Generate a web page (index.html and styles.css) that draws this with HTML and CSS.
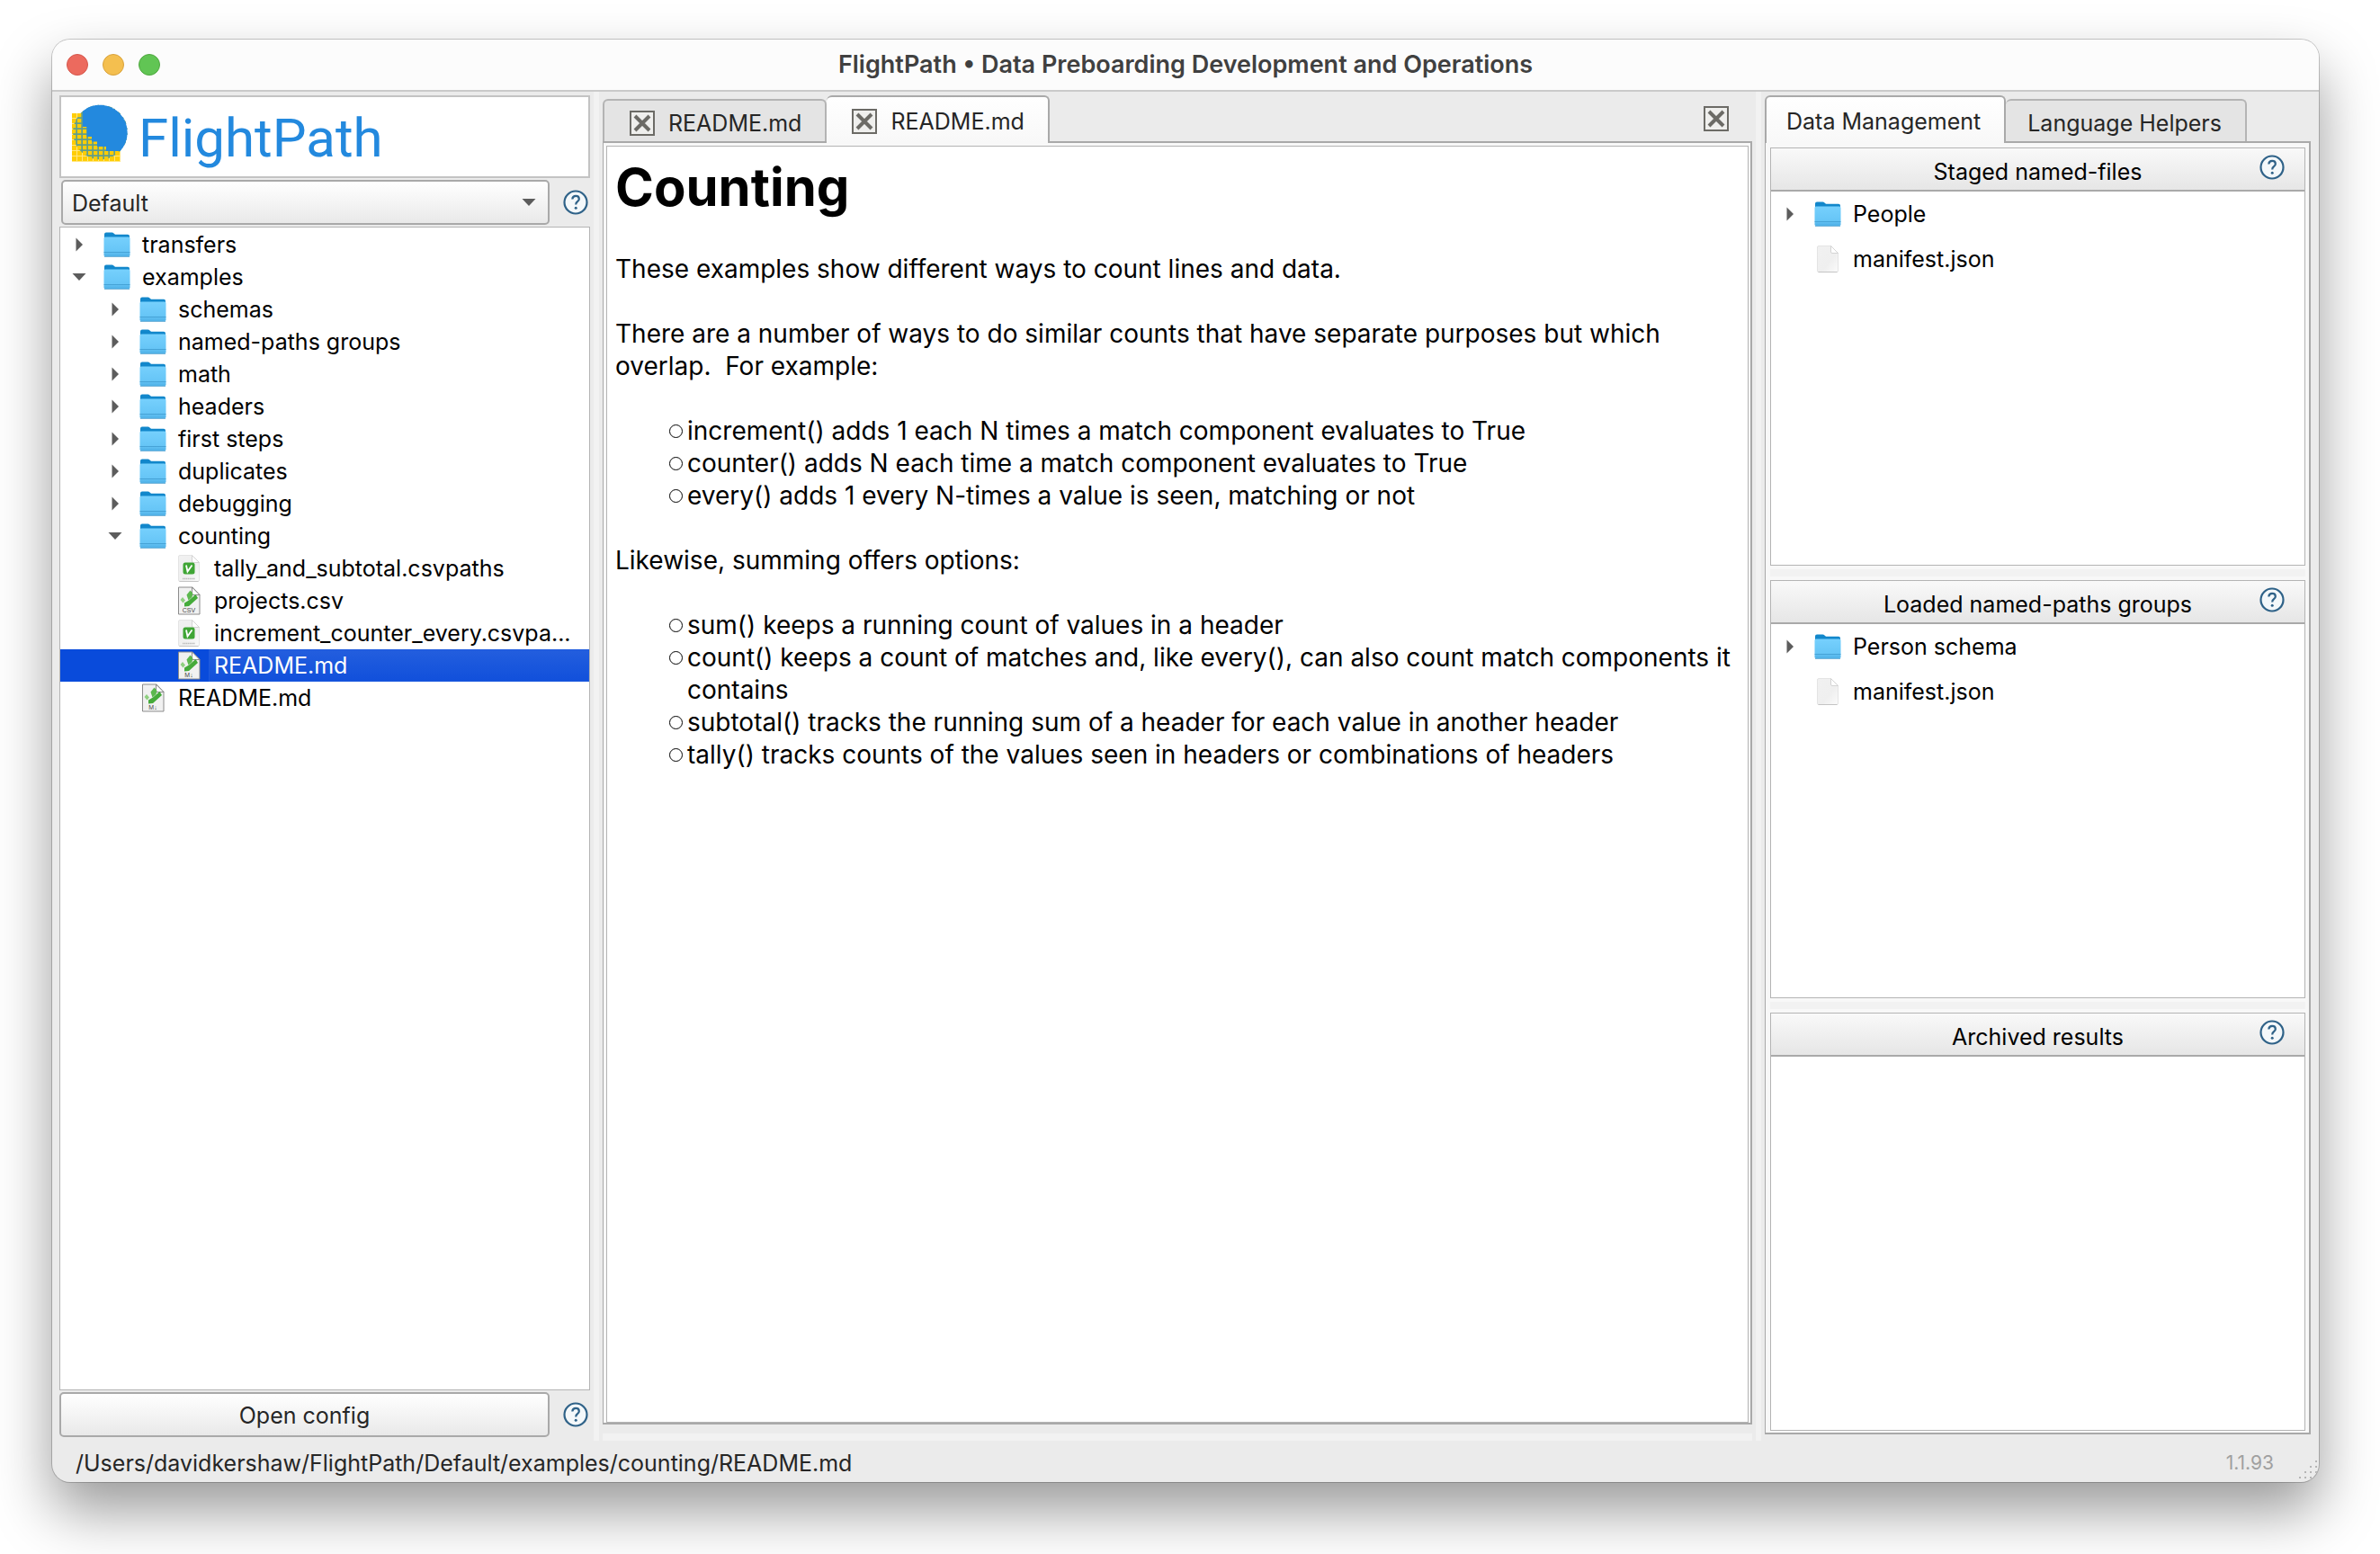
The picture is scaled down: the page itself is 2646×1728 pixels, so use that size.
FILE: index.html
```html
<!DOCTYPE html>
<html lang="en">
<head>
<meta charset="utf-8">
<title>FlightPath • Data Preboarding Development and Operations</title>
<link rel="stylesheet" href="styles.css">
</head>
<body>
<svg class="sprite" aria-hidden="true">
  <defs>
    <linearGradient id="folder-face" x1="0" y1="0" x2="0" y2="1">
      <stop offset="0" stop-color="#76d0fd"/>
      <stop offset="0.75" stop-color="#66c5f6"/>
      <stop offset="1" stop-color="#4fb0e6"/>
    </linearGradient>
    <linearGradient id="sheet-face" x1="0" y1="0" x2="1" y2="1">
      <stop offset="0" stop-color="#f1f1f1"/>
      <stop offset="0.6" stop-color="#efefef"/>
      <stop offset="1" stop-color="#fbfbfb"/>
    </linearGradient>
    <pattern id="logo-mesh" y="4" width="6" height="6" patternUnits="userSpaceOnUse">
      <rect width="6" height="6" fill="#ffe680"/>
      <rect width="5" height="5" fill="#ffcd05"/>
    </pattern>
    <pattern id="logo-net" y="4" width="6" height="6" patternUnits="userSpaceOnUse">
      <path d="M5.200 0V6M0 5.200H6" stroke="#5f9e8c" stroke-width="1.800"/>
    </pattern>
    <symbol id="folder" viewBox="0 0 32 32">
      <path d="M2 4.500q0-2 2-2h6.500q1 0 2 1l1.500 1.200H28q2 0 2 2V14H2z" fill="#1287cb"/>
      <path d="M1.500 9q0-1.500 1.500-1.500h26q1.500 0 1.500 1.500v18.500q0 1.500-1.500 1.500H3q-1.500 0-1.500-1.500z" fill="url(#folder-face)"/>
      <path d="M1.500 24.500h29M2 29.500h28" stroke="#3b96cb" stroke-width="1" opacity="0.700"/>
    </symbol>
    <symbol id="sheet" viewBox="0 0 32 32">
      <path d="M4.500 3q0-1.500 1.500-1.500h13.500l8 8V29q0 1.500-1.500 1.500H6q-1.500 0-1.500-1.500z" fill="url(#sheet-face)" stroke="#e4e4e4"/>
      <path d="M19.500 1.500v6.500q0 1.500 1.500 1.500h6.500z" fill="#fff" stroke="#d4d4d4"/>
      <path d="M5.500 30.500h21" stroke="#c4c4c4"/>
    </symbol>
    <symbol id="csvpaths" viewBox="0 0 32 32">
      <use href="#sheet"/>
      <rect x="9.500" y="9.500" width="13" height="13" rx="2.500" fill="#3fa535"/>
      <path d="M13 12.500l1.500 7 5-7" fill="none" stroke="#fff" stroke-width="1.800"/>
      <path d="M9 27.500h14" stroke="#bdbdbd" stroke-width="1.500" stroke-dasharray="1.500 0.500"/>
    </symbol>
    <symbol id="vimdoc" viewBox="0 0 32 32">
      <path d="M4.500 1h15.500l8 8.500V31H4.500z" fill="#f1f1f1" stroke="#8c8c8c"/>
      <path d="M19.500 1v8.500H28z" fill="#fff" stroke="#8c8c8c"/>
      <path d="M6.500 15l2.500-3 3 3.500-2.500 3z" fill="#8fd080"/>
      <path d="M13.500 9.500l4-5 3 3.500-1 4-4 3.500z" fill="#5cb84e"/>
      <path d="M11 18.500l5-3 7.500-6.500 2.500 4-10 9-5 0.500z" fill="#45ab3a"/>
    </symbol>
    <symbol id="help" viewBox="0 0 28 28">
      <circle cx="14" cy="14" r="12.500" fill="#f4f8fa" stroke="#2f6288" stroke-width="2.200"/>
      <path d="M10.300 10.500q0.300-3.600 3.800-3.600 3.700 0 3.700 3.300 0 1.800-1.900 3-1.700 1.100-1.700 3.300" fill="none" stroke="#2f6288" stroke-width="2.200"/>
      <circle cx="14.200" cy="20.300" r="1.500" fill="#2f6288"/>
    </symbol>
    <symbol id="cross-box" viewBox="0 0 28 28">
      <rect x="1" y="1" width="26" height="26" fill="#efefed" stroke="#6c6b66" stroke-width="2"/>
      <path d="M6 6l16 16M22 6L6 22" stroke="#6c6b66" stroke-width="4"/>
    </symbol>
    <symbol id="right" viewBox="0 0 16 16"><path d="M4.500 0.500v15L12 8z" fill="#5c5c5c"/></symbol>
    <symbol id="down" viewBox="0 0 16 16"><path d="M0.500 4h15L8 12z" fill="#5c5c5c"/></symbol>
  </defs>
</svg>

<div class="window">
  <header class="titlebar">
    <div class="lights">
      <button class="light light-close" aria-label="Close"></button>
      <button class="light light-min" aria-label="Minimize"></button>
      <button class="light light-zoom" aria-label="Zoom"></button>
    </div>
    <h1 class="title">FlightPath • Data Preboarding Development and Operations</h1>
  </header>

  <main class="panes">
    <section class="sidebar">
      <div class="logo">
        <svg class="logo-mark" viewBox="0 0 64 64" aria-hidden="true">
          <rect y="10" width="54" height="54" fill="url(#logo-mesh)"/>
          <circle cx="31.500" cy="31" r="30.500" fill="url(#logo-net)"/>
          <path d="M12 7.500A30.500 30.500 0 0 1 53.500 52H38V47H28V41.500H22V36H16.500V25H12z" fill="#2389de"/>
        </svg>
        <span class="logo-text">FlightPath</span>
      </div>
      <div class="field-row">
        <div class="select-wrap">
          <select class="project" aria-label="Project"><option>Default</option></select>
          <svg class="select-arrow" aria-hidden="true"><use href="#down"/></svg>
        </div>
        <button class="help" aria-label="Help"><svg><use href="#help"/></svg></button>
      </div>
      <ul class="tree box">
        <li class="row"><svg class="arrow"><use href="#right"/></svg><svg class="icon"><use href="#folder"/></svg><span class="name">transfers</span></li>
        <li class="row"><svg class="arrow"><use href="#down"/></svg><svg class="icon"><use href="#folder"/></svg><span class="name">examples</span></li>
        <li class="row level-1"><svg class="arrow"><use href="#right"/></svg><svg class="icon"><use href="#folder"/></svg><span class="name">schemas</span></li>
        <li class="row level-1"><svg class="arrow"><use href="#right"/></svg><svg class="icon"><use href="#folder"/></svg><span class="name">named-paths groups</span></li>
        <li class="row level-1"><svg class="arrow"><use href="#right"/></svg><svg class="icon"><use href="#folder"/></svg><span class="name">math</span></li>
        <li class="row level-1"><svg class="arrow"><use href="#right"/></svg><svg class="icon"><use href="#folder"/></svg><span class="name">headers</span></li>
        <li class="row level-1"><svg class="arrow"><use href="#right"/></svg><svg class="icon"><use href="#folder"/></svg><span class="name">first steps</span></li>
        <li class="row level-1"><svg class="arrow"><use href="#right"/></svg><svg class="icon"><use href="#folder"/></svg><span class="name">duplicates</span></li>
        <li class="row level-1"><svg class="arrow"><use href="#right"/></svg><svg class="icon"><use href="#folder"/></svg><span class="name">debugging</span></li>
        <li class="row level-1"><svg class="arrow"><use href="#down"/></svg><svg class="icon"><use href="#folder"/></svg><span class="name">counting</span></li>
        <li class="row level-2"><span class="arrow"></span><svg class="icon"><use href="#csvpaths"/></svg><span class="name">tally_and_subtotal.csvpaths</span></li>
        <li class="row level-2"><span class="arrow"></span><svg class="icon" viewBox="0 0 32 32"><use href="#vimdoc"/><text class="icon-label" x="16" y="29">CSV</text></svg><span class="name">projects.csv</span></li>
        <li class="row level-2"><span class="arrow"></span><svg class="icon"><use href="#csvpaths"/></svg><span class="name">increment_counter_every.csvpa...</span></li>
        <li class="row level-2 selected"><span class="arrow"></span><svg class="icon" viewBox="0 0 32 32"><use href="#vimdoc"/><text class="icon-label" x="16" y="29">M↓</text></svg><span class="name">README.md</span></li>
        <li class="row level-1"><span class="arrow"></span><svg class="icon" viewBox="0 0 32 32"><use href="#vimdoc"/><text class="icon-label" x="16" y="29">M↓</text></svg><span class="name">README.md</span></li>
      </ul>
      <div class="field-row">
        <button class="config">Open config</button>
        <button class="help" aria-label="Help"><svg><use href="#help"/></svg></button>
      </div>
    </section>

    <div class="splitter"></div>

    <section class="editor">
      <div class="tabs">
        <button class="tab file-tab"><svg class="cross"><use href="#cross-box"/></svg>README.md</button>
        <button class="tab file-tab active"><svg class="cross"><use href="#cross-box"/></svg>README.md</button>
        <button class="close-all" aria-label="Close all tabs"><svg class="cross"><use href="#cross-box"/></svg></button>
      </div>
      <div class="tab-pane editor-pane">
        <article class="document box">
          <h2>Counting</h2>
          <p>These examples show different ways to count lines and data.</p>
          <p>There are a number of ways to do similar counts that have separate purposes but which overlap.&nbsp; For example:</p>
          <ul>
            <li>increment() adds 1 each N times a match component evaluates to True</li>
            <li>counter() adds N each time a match component evaluates to True</li>
            <li>every() adds 1 every N-times a value is seen, matching or not</li>
          </ul>
          <p>Likewise, summing offers options:</p>
          <ul>
            <li>sum() keeps a running count of values in a header</li>
            <li>count() keeps a count of matches and, like every(), can also count match components it contains</li>
            <li>subtotal() tracks the running sum of a header for each value in another header</li>
            <li>tally() tracks counts of the values seen in headers or combinations of headers</li>
          </ul>
        </article>
      </div>
      <div class="grip"></div>
    </section>

    <div class="splitter"></div>

    <section class="data">
      <div class="tabs">
        <button class="tab active">Data Management</button>
        <button class="tab">Language Helpers</button>
      </div>
      <div class="tab-pane data-pane">
        <div class="group box">
          <div class="group-head"><h3>Staged named-files</h3><button class="help" aria-label="Help"><svg><use href="#help"/></svg></button></div>
          <ul class="group-list">
            <li class="row tall"><svg class="arrow"><use href="#right"/></svg><svg class="icon"><use href="#folder"/></svg><span class="name">People</span></li>
            <li class="row tall"><span class="arrow"></span><svg class="icon"><use href="#sheet"/></svg><span class="name">manifest.json</span></li>
          </ul>
        </div>
        <div class="grip"></div>
        <div class="group box">
          <div class="group-head"><h3>Loaded named-paths groups</h3><button class="help" aria-label="Help"><svg><use href="#help"/></svg></button></div>
          <ul class="group-list">
            <li class="row tall"><svg class="arrow"><use href="#right"/></svg><svg class="icon"><use href="#folder"/></svg><span class="name">Person schema</span></li>
            <li class="row tall"><span class="arrow"></span><svg class="icon"><use href="#sheet"/></svg><span class="name">manifest.json</span></li>
          </ul>
        </div>
        <div class="grip"></div>
        <div class="group box">
          <div class="group-head"><h3>Archived results</h3><button class="help" aria-label="Help"><svg><use href="#help"/></svg></button></div>
        </div>
      </div>
    </section>
  </main>

  <footer class="status">
    <span>/Users/davidkershaw/FlightPath/Default/examples/counting/README.md</span>
    <span class="version">1.1.93</span>
    <svg class="resize" viewBox="0 0 24 24" aria-hidden="true">
      <path d="M20 0h2v2h-2zM14 6h2v2h-2zM20 6h2v2h-2zM8 12h2v2H8zM14 12h2v2h-2zM20 12h2v2h-2zM2 18h2v2H2zM8 18h2v2H8zM14 18h2v2h-2z" fill="#b5b5b5"/>
    </svg>
  </footer>
</div>
</body>
</html>
```
FILE: styles.css
```css
* {
  box-sizing: border-box;
}

body {
  margin: 0;
  min-height: 100vh;
  padding: 44px 68px 80px 58px;
  display: flex;
  background: #fff;
  color: #000;
  font: 25px/36px Inter, "Liberation Sans", sans-serif;
}

ul {
  margin: 0;
  padding: 0;
  list-style: none;
}

button,
select {
  margin: 0;
  padding: 0;
  border: 0;
  background: none;
  color: #262626;
  font: inherit;
}

.sprite {
  position: absolute;
  width: 0;
  height: 0;
}

.window {
  flex: 1;
  min-width: 0;
  display: flex;
  flex-direction: column;
  overflow: hidden;
  border-radius: 20px;
  background: #ebebeb;
  box-shadow: 0 0 0 1px rgba(0, 0, 0, 0.2), 0 32px 64px rgba(0, 0, 0, 0.4);
}

.titlebar {
  display: grid;
  grid-template-columns: 1fr auto 1fr;
  align-items: center;
  height: 58px;
  padding: 0 16px;
  border-bottom: 2px solid #cacaca;
  background: #fcfcfc;
}

.lights {
  display: flex;
  gap: 16px;
}

.light {
  width: 24px;
  height: 24px;
  border-radius: 50%;
}

.light-close {
  border: 1px solid #d5574c;
  background: #ec6a5e;
}

.light-min {
  border: 1px solid #d8a23c;
  background: #f4bf4f;
}

.light-zoom {
  border: 1px solid #4fa73f;
  background: #61c554;
}

.title {
  margin: 0;
  color: #404040;
  font-size: 27px;
  font-weight: 600;
}

.panes {
  flex: 1;
  display: grid;
  grid-template-columns: 590px 6px minmax(0, 1fr) 6px 607px;
  gap: 4px;
  padding: 0 9px 0 8px;
}

.box {
  border: 1px solid #b4b4b4;
  background: #fff;
}

.splitter {
  background: #f2f2f2;
}

.grip {
  height: 8px;
  background: #f2f2f2;
}

.sidebar {
  display: flex;
  flex-direction: column;
  gap: 2px;
  padding: 4px 0;
}

.logo {
  display: flex;
  align-items: flex-start;
  gap: 10px;
  height: 92px;
  padding: 8px 12px;
  border: 2px solid #c3c3c3;
  background: #fff;
}

.logo-mark {
  width: 64px;
  height: 64px;
}

.logo-text {
  color: #2389de;
  font: 400 60px/76px Roboto, sans-serif;
}

.field-row {
  display: flex;
  align-items: center;
  gap: 15px;
  height: 50px;
  padding-right: 2px;
}

.select-wrap {
  position: relative;
  flex: 1;
  height: 50px;
  margin-left: 2px;
}

.project,
.config {
  height: 50px;
  padding-top: 2px;
  border: 2px solid #a9a9a9;
  border-radius: 5px;
  background: linear-gradient(#fff, #e9e9e9);
}

.project {
  width: 100%;
  padding-left: 10px;
  appearance: none;
}

.select-arrow {
  position: absolute;
  top: 17px;
  right: 15px;
  width: 16px;
  height: 16px;
  pointer-events: none;
}

.config {
  flex: 1;
}

.help {
  display: flex;
}

.help svg {
  width: 28px;
  height: 28px;
}

.tree {
  flex: 1;
  padding-top: 1px;
}

.row {
  display: flex;
  align-items: center;
  height: 36px;
  padding-left: 13px;
}

.level-1 {
  padding-left: 53px;
}

.level-2 {
  padding-left: 93px;
}

.tall {
  height: 50px;
}

.selected {
  background: #094bdb;
}

.arrow {
  flex: none;
  width: 16px;
  height: 16px;
  margin-right: 18px;
}

.icon {
  flex: none;
  width: 32px;
  height: 32px;
}

.icon-label {
  font: 7px "Liberation Sans", sans-serif;
  text-anchor: middle;
  fill: #444;
}

.name {
  flex: 1;
  height: 100%;
  display: flex;
  align-items: center;
  margin-left: 6px;
  padding-left: 6px;
  white-space: nowrap;
}

.selected .name {
  border: 1px solid #1d5ade;
  padding-left: 5px;
  background: linear-gradient(#235ede, #1150db);
  color: #fff;
}

.editor,
.data {
  display: flex;
  flex-direction: column;
  padding-top: 4px;
}

.tabs {
  display: flex;
  align-items: flex-end;
  height: 51px;
}

.tab {
  display: flex;
  align-items: center;
  height: 47px;
  padding: 4px 26px 0 24px;
  border: 2px solid #b4b4b4;
  border-bottom: 0;
  border-radius: 6px 6px 0 0;
  background: #e4e4e4;
}

.tab + .tab {
  border-left-width: 0;
}

.tab.active {
  height: 53px;
  margin-bottom: -2px;
  padding-left: 22px;
  padding-bottom: 2px;
  border-color: #a9a9a9;
  background: linear-gradient(#fff, #f8f8f8);
  z-index: 1;
}

.tab.file-tab {
  gap: 15px;
  padding-left: 28px;
  padding-right: 26px;
}

.cross {
  width: 28px;
  height: 28px;
}

.close-all {
  display: flex;
  align-self: center;
  margin-left: auto;
  margin-right: 26px;
}

.tab-pane {
  flex: 1;
  display: flex;
  flex-direction: column;
  border: 2px solid #a9a9a9;
  border-left-width: 1px;
  background: #f8f8f8;
}

.editor-pane {
  padding: 3px 2px 0 3px;
}

.editor .grip {
  margin-top: 10px;
}

.document {
  flex: 1;
  padding: 8px 8px 8px 9px;
  font-size: 28px;
}

.document h2 {
  margin: 0 0 36px;
  font-size: 58px;
  line-height: 74px;
}

.document p,
.document ul {
  margin: 0 0 36px;
}

.document ul {
  padding-left: 80px;
}

.document li {
  position: relative;
}

.document li::before {
  content: "";
  position: absolute;
  top: 11px;
  left: -20px;
  width: 13px;
  height: 13px;
  border: 1px solid #000;
  border-radius: 50%;
}

.data-pane {
  gap: 4px;
  padding: 5px 4px 2px 5px;
  margin-bottom: 7px;
}

.group {
  flex: 1;
}

.group-head {
  display: grid;
  grid-template-columns: 64px 1fr 64px;
  align-items: center;
  height: 48px;
  border-bottom: 2px solid #a9a9a9;
  background: linear-gradient(#f9f9f9, #e6e6e6);
}

.group-head h3 {
  grid-column: 2;
  margin: 0;
  padding-top: 6px;
  text-align: center;
  font-size: 25px;
  font-weight: 400;
}

.group-head .help {
  margin-left: 14px;
  margin-bottom: 4px;
}

.status {
  display: flex;
  align-items: center;
  height: 46px;
  padding-top: 4px;
  padding-left: 26px;
  color: #262626;
}

.version {
  margin-left: auto;
  margin-right: 26px;
  color: #a0a0a0;
  font-size: 21px;
}

.resize {
  width: 24px;
  height: 24px;
  align-self: flex-end;
}
```
